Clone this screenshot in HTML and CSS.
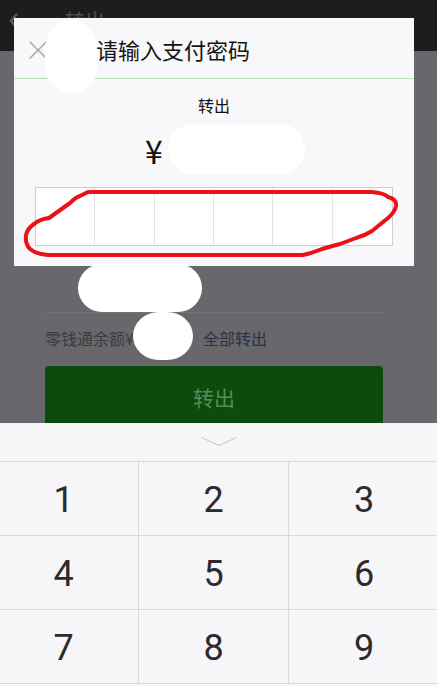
FILE: index.html
```html
<!DOCTYPE html>
<html lang="zh-CN">
<head>
<meta charset="utf-8">
<title>请输入支付密码</title>
<link rel="stylesheet" href="styles.css">
</head>
<body>
<div class="page">
  <header class="appbar">
    <svg class="back" width="12" height="18" viewBox="0 0 12 18"><path d="M9 2 L3 9 L9 16" fill="none" stroke="#5a5a5d" stroke-width="2.4"/></svg>
    <span class="appbar-title">转出</span>
  </header>

  <main class="content">
    <div class="divider"></div>
    <div class="balance">
      <span class="balance-label">零钱通余额¥</span>
      <span class="balance-amount"></span>
      <span class="balance-all">全部转出</span>
    </div>
    <div class="submit">转出</div>
  </main>

  <section class="keyboard">
    <div class="kb-handle">
      <svg width="36" height="10" viewBox="0 0 36 10"><path d="M0.5 0.5 L18 8.5 L35.5 0.5" fill="none" stroke="#c4c3c6" stroke-width="1"/></svg>
    </div>
    <div class="keypad">
      <div class="key">1</div><div class="key">2</div><div class="key">3</div>
      <div class="key">4</div><div class="key">5</div><div class="key">6</div>
      <div class="key">7</div><div class="key">8</div><div class="key">9</div>
    </div>
  </section>

  <div class="dialog">
    <div class="dialog-head">
      <span class="close">×</span>
      <span class="dialog-title">请输入支付密码</span>
    </div>
    <div class="dialog-body">
      <div class="dialog-label">转出</div>
      <div class="dialog-amount"><span class="yen">¥</span><span class="amount-space"></span></div>
      <div class="pwd">
        <span class="cell"></span><span class="cell"></span><span class="cell"></span>
        <span class="cell"></span><span class="cell"></span><span class="cell"></span>
      </div>
    </div>
  </div>

  <div class="blob blob-avatar"></div>
  <div class="blob blob-amount"></div>
  <div class="blob blob-under"></div>
  <div class="blob blob-balance"></div>

  <svg class="scribble" width="437" height="686" viewBox="0 0 437 686">
    <path d="M88 192 L372 192 Q384 193 388 197 Q397 199 396 206 Q395 212 388 218 L372 231 Q364 236 356 238 Q348 241 340 244 Q332 246 322 249 Q312 253 303 255 L48 255 Q36 254 30 249 Q25 244 26 235 Q27 229 34 224 Q40 219 49 218 L70 203 Q76 197 80 196 Z" fill="none" stroke="#ea1118" stroke-width="4" stroke-linejoin="round"/>
  </svg>
</div>
</body>
</html>
```

FILE: styles.css
```css
* { box-sizing: border-box; }
html, body {
  margin: 0;
  padding: 0;
  width: 437px;
  height: 686px;
  overflow: hidden;
  font-family: "Noto Sans CJK SC", Roboto, "Noto Sans", sans-serif;
}
.page {
  position: relative;
  width: 437px;
  height: 686px;
  display: flex;
  flex-direction: column;
  background: #68676b;
  overflow: hidden;
}
.appbar {
  height: 51px;
  flex: none;
  background: #1d1d20;
  display: flex;
  align-items: flex-start;
  padding: 9px 0 0 8px;
}
.back { margin-top: 3px; }
.appbar-title {
  margin-left: 45px;
  font-size: 20px;
  line-height: 24px;
  color: #4f4f52;
}
.content {
  flex: none;
  height: 372px;
  padding: 261px 54px 0 45px;
  overflow: hidden;
}
.divider {
  height: 1px;
  background: #737276;
}
.balance {
  height: 53px;
  display: flex;
  align-items: center;
  font-size: 16px;
  padding-bottom: 4px;
}
.balance-label { color: #3c3b3f; }
.balance-amount { width: 69px; }
.balance-all { color: #2b3142; }
.submit {
  height: 62px;
  border-radius: 4px;
  background: #0b4b0c;
  color: #5a8a5a;
  font-size: 21px;
  display: flex;
  align-items: center;
  justify-content: center;
}
.keyboard {
  flex: 1;
  background: #f6f5f7;
}
.kb-handle {
  height: 39px;
  display: flex;
  justify-content: center;
  padding-top: 14px;
  border-bottom: 1px solid #d9d8db;
}
.keypad {
  display: grid;
  grid-template-columns: 150px 150px 150px;
  grid-auto-rows: 74px;
  margin-left: -11px;
  width: 450px;
}
.key {
  display: flex;
  align-items: center;
  justify-content: center;
  font-family: Roboto, "Noto Sans", sans-serif;
  font-size: 36px;
  padding-top: 3px;
  color: #2b2b2d;
  border-bottom: 1px solid #d9d8db;
  border-right: 1px solid #d9d8db;
}
.key:nth-child(3n) { border-right: none; }

.dialog {
  position: absolute;
  left: 14px;
  top: 18px;
  width: 400px;
  height: 248px;
  background: #f8f7f9;
}
.dialog-head {
  height: 61px;
  border-bottom: 1px solid #b8dfb8;
  display: flex;
  align-items: center;
  padding-top: 2px;
}
.close {
  width: 82px;
  padding-left: 10px;
  font-size: 28px;
  font-weight: 300;
  color: #a9a8ab;
  line-height: 1;
}
.dialog-title {
  font-size: 22px;
  color: #151515;
}
.dialog-body {
  display: flex;
  flex-direction: column;
  align-items: center;
  padding-top: 14px;
}
.dialog-label {
  font-size: 16px;
  line-height: 24px;
  color: #111;
}
.dialog-amount {
  align-self: flex-start;
  margin: 13px 0 0 131px;
  height: 40px;
  display: flex;
  align-items: center;
}
.yen {
  font-family: "Noto Sans CJK SC", sans-serif;
  font-size: 32px;
  line-height: 40px;
  color: #111;
}
.amount-space { width: 138px; }
.pwd {
  margin-top: 17px;
  width: 358px;
  height: 59px;
  border: 1px solid #cfcfd1;
  background: #fff;
  display: grid;
  grid-template-columns: repeat(6, 1fr);
}
.cell { border-right: 1px solid #e4e4e6; }
.cell:last-child { border-right: none; }

.blob {
  position: absolute;
  background: #fff;
}
.blob-avatar {
  left: 45px; top: 20px; width: 52px; height: 73px;
  border-radius: 26px 26px 24px 28px / 30px 30px 26px 26px;
}
.blob-amount {
  left: 168px; top: 124px; width: 137px; height: 50px;
  border-radius: 25px;
}
.blob-under {
  left: 78px; top: 264px; width: 124px; height: 48px;
  border-radius: 24px;
}
.blob-balance {
  left: 133px; top: 312px; width: 60px; height: 48px;
  border-radius: 26px / 24px;
}
.scribble {
  position: absolute;
  left: 0;
  top: 0;
}
```
